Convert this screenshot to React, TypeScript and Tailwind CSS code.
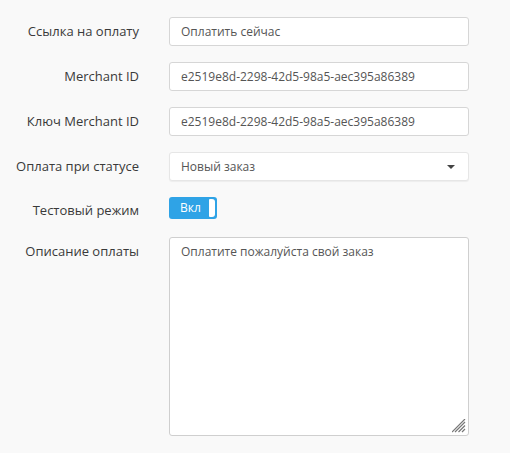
import { useState } from "react";

const font = { fontFamily: '"Open Sans", "Noto Sans", sans-serif' };

function Label({ children, top }: { children: React.ReactNode; top?: boolean }) {
  return (
    <div
      className={`flex justify-end text-[13px] text-[#3a3a3a] ${top ? "items-start pt-[5px]" : "items-center"}`}
    >
      {children}
    </div>
  );
}

export default function App() {
  const [testMode, setTestMode] = useState(true);

  return (
    <div className="min-h-[453px] w-[510px] bg-[#f9f9f9] pt-[17px]" style={font}>
      <div className="grid grid-cols-[139px_300px] gap-x-[30px] gap-y-4">
        {/* Payment link */}
        <Label>Ссылка на оплату</Label>
        <input
          className="h-[29px] rounded-[3px] border border-[#d6d6d6] bg-white px-[11px] text-[12px] text-[#555] outline-none"
          defaultValue="Оплатить сейчас"
        />

        {/* Merchant ID */}
        <Label>Merchant ID</Label>
        <input
          className="h-[29px] rounded-[3px] border border-[#d6d6d6] bg-white px-[11px] text-[12px] text-[#555] outline-none"
          defaultValue="e2519e8d-2298-42d5-98a5-aec395a86389"
        />

        <Label>Ключ Merchant ID</Label>
        <input
          className="h-[29px] rounded-[3px] border border-[#d6d6d6] bg-white px-[11px] text-[12px] text-[#555] outline-none"
          defaultValue="e2519e8d-2298-42d5-98a5-aec395a86389"
        />

        {/* Status select */}
        <Label>Оплата при статусе</Label>
        <div className="flex h-[29px] items-center justify-between rounded-[3px] border border-[#e6e6e6] bg-white pl-[11px] pr-[13px] text-[12px] text-[#555] shadow-[0_1px_1px_rgba(0,0,0,0.05)]">
          <span>Новый заказ</span>
          <svg width="8" height="4" viewBox="0 0 8 4">
            <path d="M0 0h8L4 4z" fill="#444" />
          </svg>
        </div>

        {/* Test mode toggle */}
        <div className="flex items-center justify-end pt-[4px] text-[13px] text-[#3a3a3a]">Тестовый режим</div>
        <div className="flex h-[24px] items-start">
          <button
            onClick={() => setTestMode(!testMode)}
            className="flex h-[22px] w-[48px] items-center justify-between rounded-[3px] bg-[#2fa3e6] pl-[11px] pr-[2px] text-[12px] text-white"
          >
            <span>{testMode ? "Вкл" : "Выкл"}</span>
            <span className="h-[18px] w-[6px] rounded-r-[3px] rounded-l-[1px] bg-white" />
          </button>
        </div>

        {/* Description */}
        <Label top>Описание оплаты</Label>
        <div className="relative h-[199px]">
          <textarea
            className="h-full w-full resize-none rounded-[3px] border border-[#cfcfcf] bg-white px-[11px] py-[5px] text-[12px] leading-[18px] text-[#555] outline-none"
            defaultValue="Оплатите пожалуйста свой заказ"
          />
          <svg className="absolute bottom-[3px] right-[3px]" width="14" height="14" viewBox="0 0 14 14">
            <path d="M13 3L3 13M13 6.5L6.5 13M13 10L10 13M13 0L0 13" stroke="#777" strokeWidth="1.2" />
          </svg>
        </div>
      </div>
    </div>
  );
}
